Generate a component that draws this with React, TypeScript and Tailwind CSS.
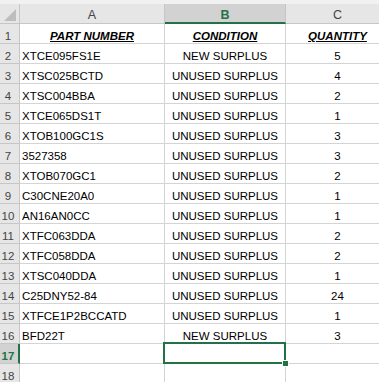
const rows: [string, string, string][] = [
  ["XTCE095FS1E", "NEW SURPLUS", "5"],
  ["XTSC025BCTD", "UNUSED SURPLUS", "4"],
  ["XTSC004BBA", "UNUSED SURPLUS", "2"],
  ["XTCE065DS1T", "UNUSED SURPLUS", "1"],
  ["XTOB100GC1S", "UNUSED SURPLUS", "3"],
  ["3527358", "UNUSED SURPLUS", "3"],
  ["XTOB070GC1", "UNUSED SURPLUS", "2"],
  ["C30CNE20A0", "UNUSED SURPLUS", "1"],
  ["AN16AN0CC", "UNUSED SURPLUS", "1"],
  ["XTFC063DDA", "UNUSED SURPLUS", "2"],
  ["XTFC058DDA", "UNUSED SURPLUS", "2"],
  ["XTSC040DDA", "UNUSED SURPLUS", "1"],
  ["C25DNY52-84", "UNUSED SURPLUS", "24"],
  ["XTFCE1P2BCCATD", "UNUSED SURPLUS", "1"],
  ["BFD22T", "NEW SURPLUS", "3"],
  ["", "", ""],
  ["", "", ""],
];

const cell = "h-5 flex items-end border-b border-r border-[#d4d4d4] leading-[13px] whitespace-nowrap";

function RowHead({ n, active }: { n: number; active?: boolean }) {
  return (
    <div
      className={
        active
          ? "h-5 flex items-end pl-[1px] border-b border-r-2 border-b-[#c6c6c6] border-r-[#217346] bg-[#d2d2d2] text-[#217346] font-bold leading-[13px]"
          : "h-5 flex items-end pl-[1px] border-b border-r border-[#c6c6c6] bg-[#e6e6e6] text-[#444] leading-[13px]"
      }
    >
      <span className="w-[14px] text-center">{n}</span>
    </div>
  );
}

export default function App() {
  return (
    <div
      className="w-[379px] h-[382px] overflow-hidden bg-white text-black text-[11.5px]"
      style={{ fontFamily: '"Liberation Sans", Arial, sans-serif' }}
    >
      <div className="h-[4px] bg-[#f1f1f1]" />
      <div className="grid grid-cols-[20px_145px_121px_104px]">
        <div className="relative h-5 bg-[#e6e6e6] border-b border-r border-[#c6c6c6]">
          <svg className="absolute left-0 top-0" width="20" height="20">
            <polygon points="16,5 16,17 4,17" fill="#bdbdbd" />
          </svg>
        </div>
        <div className="h-5 flex items-end justify-center bg-[#e6e6e6] border-b border-r border-[#c6c6c6] text-[#444] text-[12.5px] leading-[15px]">
          A
        </div>
        <div className="h-5 flex items-end justify-center bg-[#d2d2d2] border-b-2 border-r border-b-[#217346] border-r-[#c6c6c6] text-[#217346] font-bold text-[12.5px] leading-[14px]">
          B
        </div>
        <div className="h-5 flex items-end justify-center bg-[#e6e6e6] border-b border-r border-[#c6c6c6] text-[#444] text-[12.5px] leading-[15px]">
          C
        </div>

        <RowHead n={1} />
        <div className={`${cell} justify-center font-bold italic underline`}>PART NUMBER</div>
        <div className={`${cell} justify-center font-bold italic underline`}>CONDITION</div>
        <div className={`${cell} justify-center font-bold italic underline`}>QUANTITY</div>

        {rows.map((r, i) => {
          const n = i + 2;
          const selected = n === 17;
          return [
            <RowHead key={`h${n}`} n={n} active={selected} />,
            <div key={`a${n}`} className={`${cell} pl-[2px] overflow-hidden`}>
              {r[0]}
            </div>,
            <div key={`b${n}`} className={`${cell} justify-center relative`}>
              {r[1]}
              {selected && (
                <div className="absolute z-10 -left-[2px] -top-[2px] w-[123px] h-[22px] border-2 border-[#217346]">
                  <div className="absolute -right-[5px] -bottom-[5px] w-[7px] h-[7px] bg-[#217346] border border-white" />
                </div>
              )}
            </div>,
            <div key={`c${n}`} className={`${cell} justify-center overflow-hidden`}>
              {r[2]}
            </div>,
          ];
        })}
      </div>
    </div>
  );
}
